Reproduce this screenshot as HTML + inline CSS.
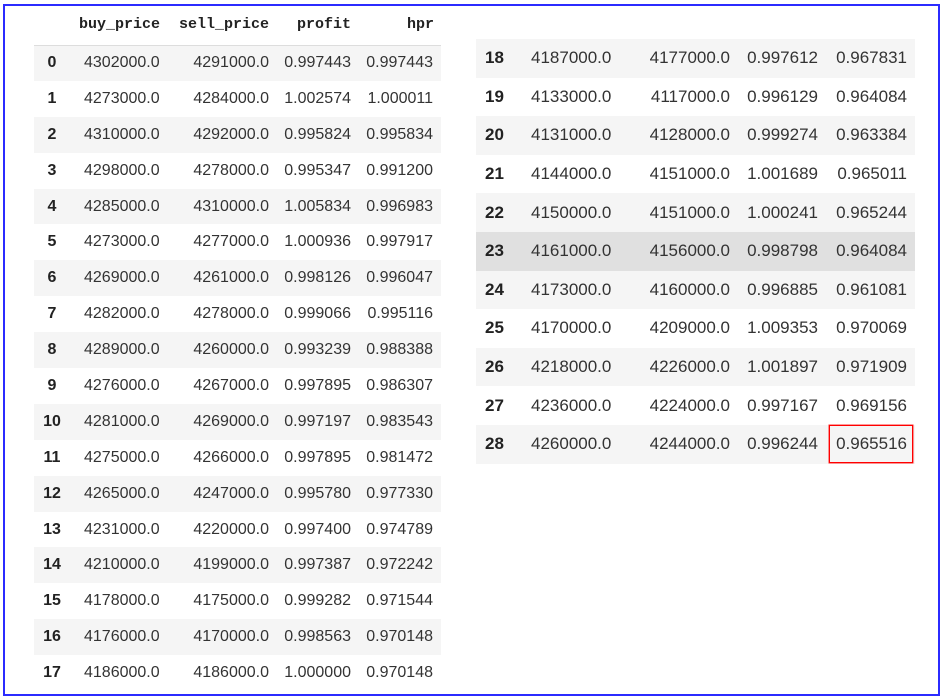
<!DOCTYPE html>
<html><head><meta charset="utf-8"><style>
body{margin:0;width:945px;height:700px;background:#fff;position:relative;overflow:hidden;font-family:"Liberation Sans","Noto Sans CJK KR",sans-serif;color:#333}
.frame{position:absolute;left:3px;top:4px;width:933px;height:688px;border:2px solid #2b2bff}
table{position:absolute;border-collapse:collapse;table-layout:fixed}
td{padding:0;white-space:nowrap}
#L{left:34px;top:10px;width:407px;font-size:16px}
#L tr{height:35.9px}
#L tr.h{height:35px;border-bottom:1px solid #ddd}
#L tr.h td{font-family:"Liberation Mono",monospace;font-weight:bold;font-size:15px;color:#222;text-align:right;padding-right:8px;vertical-align:top;padding-top:6px}
#L td:nth-child(1){text-align:center;font-weight:bold;color:#222}
#L td:nth-child(2){text-align:left;padding-left:14px}
#L td:nth-child(3),#L td:nth-child(4),#L td:nth-child(5){text-align:right;padding-right:8px}
#R{left:476px;top:39px;width:439px;font-size:17px}
#R tr{height:38.6px}
#R td:nth-child(1){text-align:left;padding-left:9px;font-weight:bold;color:#222}
#R td:nth-child(2){text-align:left;padding-left:11px}
#R td:nth-child(3),#R td:nth-child(4),#R td:nth-child(5){text-align:right;padding-right:8px}
tr.s{background:#f5f5f5}
tr.d{background:#e0e0e0}
.red{position:absolute;left:829px;top:425px;width:82px;height:36px;border:1px solid #ff0000;box-shadow:0 0 0 0.5px #ff3030}
</style></head><body>
<div class="frame"></div>
<table id="L"><colgroup><col style="width:36px"><col style="width:98px"><col style="width:109px"><col style="width:82px"><col style="width:82px"></colgroup>
<tr class="h"><td></td><td style="text-align:right;padding-left:0">buy_price</td><td>sell_price</td><td>profit</td><td style="padding-right:7px">hpr</td></tr>
<tr class="s"><td>0</td><td>4302000.0</td><td>4291000.0</td><td>0.997443</td><td>0.997443</td></tr>
<tr><td>1</td><td>4273000.0</td><td>4284000.0</td><td>1.002574</td><td>1.000011</td></tr>
<tr class="s"><td>2</td><td>4310000.0</td><td>4292000.0</td><td>0.995824</td><td>0.995834</td></tr>
<tr><td>3</td><td>4298000.0</td><td>4278000.0</td><td>0.995347</td><td>0.991200</td></tr>
<tr class="s"><td>4</td><td>4285000.0</td><td>4310000.0</td><td>1.005834</td><td>0.996983</td></tr>
<tr><td>5</td><td>4273000.0</td><td>4277000.0</td><td>1.000936</td><td>0.997917</td></tr>
<tr class="s"><td>6</td><td>4269000.0</td><td>4261000.0</td><td>0.998126</td><td>0.996047</td></tr>
<tr><td>7</td><td>4282000.0</td><td>4278000.0</td><td>0.999066</td><td>0.995116</td></tr>
<tr class="s"><td>8</td><td>4289000.0</td><td>4260000.0</td><td>0.993239</td><td>0.988388</td></tr>
<tr><td>9</td><td>4276000.0</td><td>4267000.0</td><td>0.997895</td><td>0.986307</td></tr>
<tr class="s"><td>10</td><td>4281000.0</td><td>4269000.0</td><td>0.997197</td><td>0.983543</td></tr>
<tr><td>11</td><td>4275000.0</td><td>4266000.0</td><td>0.997895</td><td>0.981472</td></tr>
<tr class="s"><td>12</td><td>4265000.0</td><td>4247000.0</td><td>0.995780</td><td>0.977330</td></tr>
<tr><td>13</td><td>4231000.0</td><td>4220000.0</td><td>0.997400</td><td>0.974789</td></tr>
<tr class="s"><td>14</td><td>4210000.0</td><td>4199000.0</td><td>0.997387</td><td>0.972242</td></tr>
<tr><td>15</td><td>4178000.0</td><td>4175000.0</td><td>0.999282</td><td>0.971544</td></tr>
<tr class="s"><td>16</td><td>4176000.0</td><td>4170000.0</td><td>0.998563</td><td>0.970148</td></tr>
<tr><td>17</td><td>4186000.0</td><td>4186000.0</td><td>1.000000</td><td>0.970148</td></tr>
</table>
<table id="R"><colgroup><col style="width:44px"><col style="width:105px"><col style="width:113px"><col style="width:88px"><col style="width:89px"></colgroup>
<tr class="s"><td>18</td><td>4187000.0</td><td>4177000.0</td><td>0.997612</td><td>0.967831</td></tr>
<tr><td>19</td><td>4133000.0</td><td>4117000.0</td><td>0.996129</td><td>0.964084</td></tr>
<tr class="s"><td>20</td><td>4131000.0</td><td>4128000.0</td><td>0.999274</td><td>0.963384</td></tr>
<tr><td>21</td><td>4144000.0</td><td>4151000.0</td><td>1.001689</td><td>0.965011</td></tr>
<tr class="s"><td>22</td><td>4150000.0</td><td>4151000.0</td><td>1.000241</td><td>0.965244</td></tr>
<tr class="d"><td>23</td><td>4161000.0</td><td>4156000.0</td><td>0.998798</td><td>0.964084</td></tr>
<tr class="s"><td>24</td><td>4173000.0</td><td>4160000.0</td><td>0.996885</td><td>0.961081</td></tr>
<tr><td>25</td><td>4170000.0</td><td>4209000.0</td><td>1.009353</td><td>0.970069</td></tr>
<tr class="s"><td>26</td><td>4218000.0</td><td>4226000.0</td><td>1.001897</td><td>0.971909</td></tr>
<tr><td>27</td><td>4236000.0</td><td>4224000.0</td><td>0.997167</td><td>0.969156</td></tr>
<tr class="s"><td>28</td><td>4260000.0</td><td>4244000.0</td><td>0.996244</td><td>0.965516</td></tr>
</table>
<div class="red"></div>
</body></html>
